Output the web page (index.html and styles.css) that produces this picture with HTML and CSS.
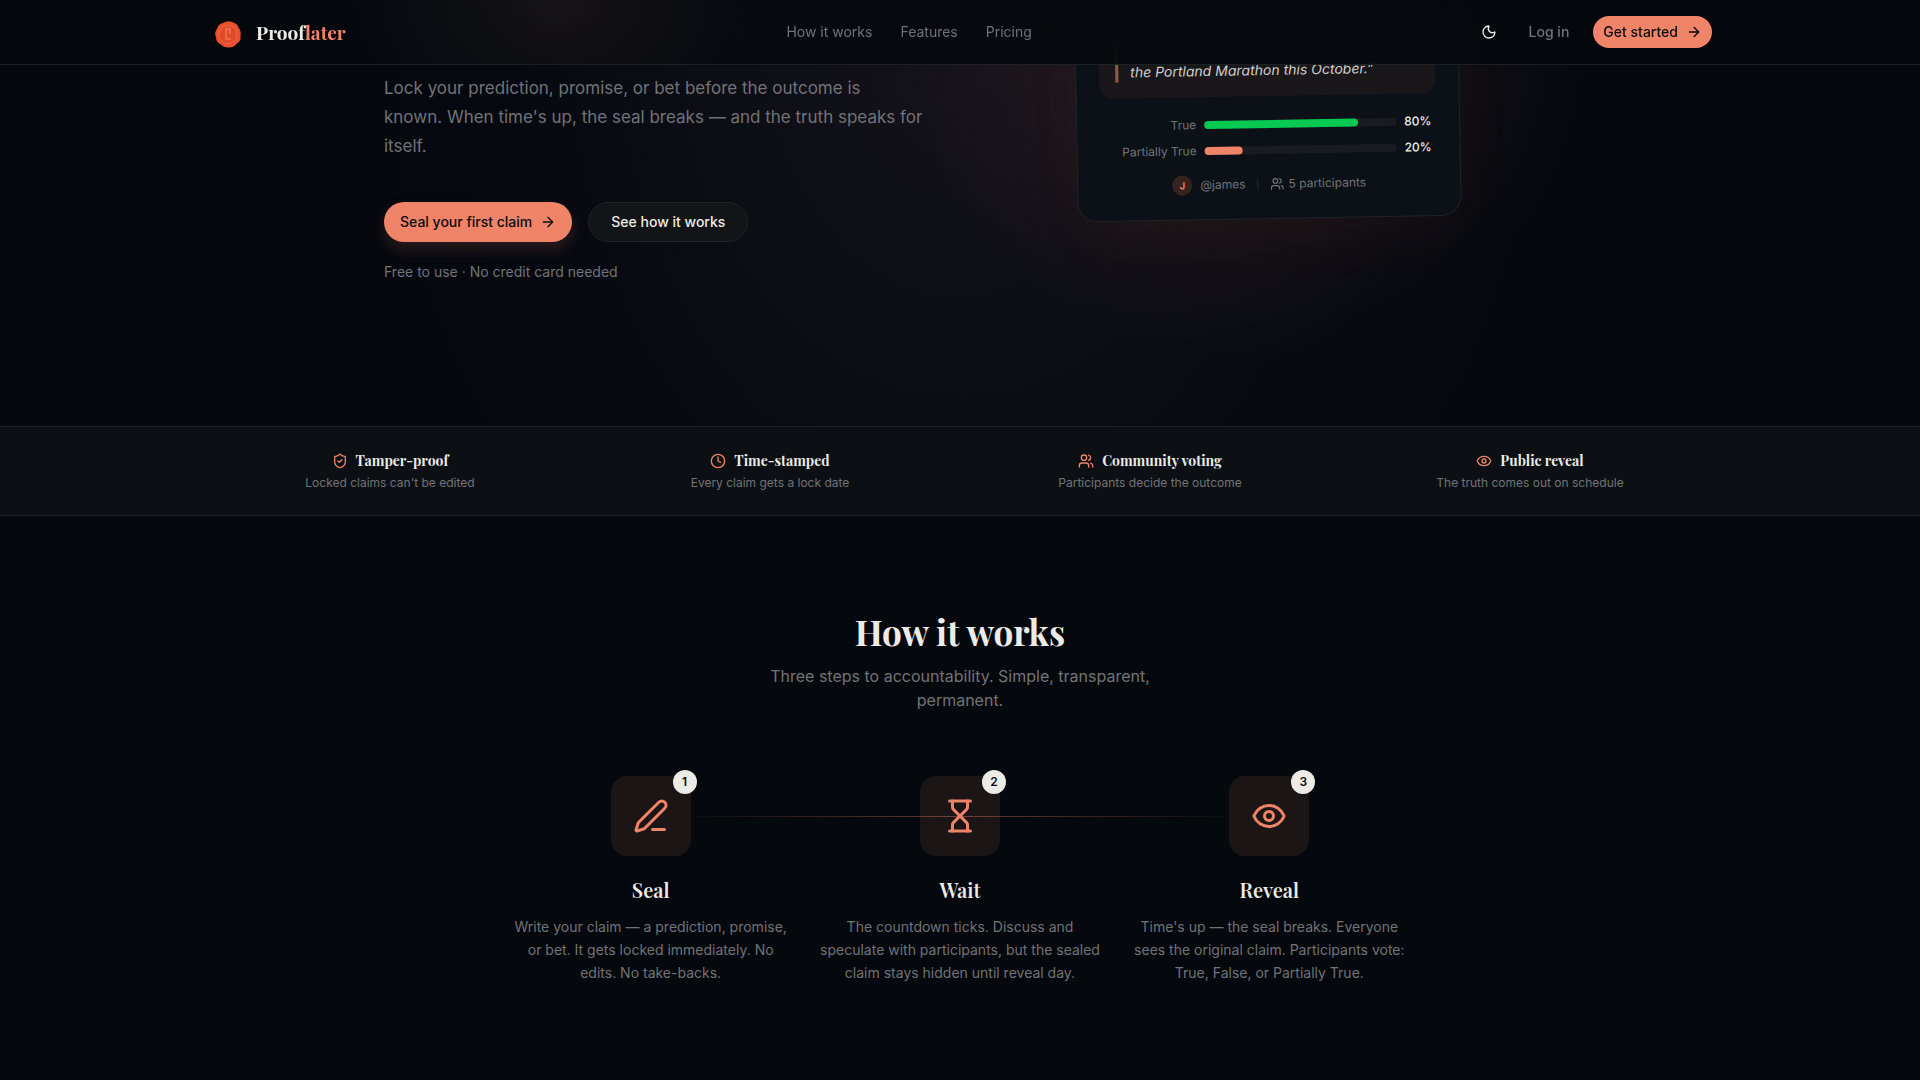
FILE: index.html
```
<!DOCTYPE html>
<html lang="en">

<head>
    <meta charset="UTF-8">
    <meta name="viewport" content="width=device-width, initial-scale=1.0">
    <title>Prooflater</title>
    <link rel="stylesheet" href="styles.css">
</head>

<body>
    <!-- shared icons -->
    <svg class="sprite" aria-hidden="true">
        <symbol id="arrow" viewBox="0 0 24 24">
            <path d="M5 12h14M12 5l7 7-7 7" />
        </symbol>
        <symbol id="users" viewBox="0 0 24 24">
            <path d="M16 21v-2a4 4 0 0 0-4-4H6a4 4 0 0 0-4 4v2" />
            <path d="M16 3.128a4 4 0 0 1 0 7.744" />
            <path d="M22 21v-2a4 4 0 0 0-3-3.87" />
            <circle cx="9" cy="7" r="4" />
        </symbol>
        <symbol id="eye" viewBox="0 0 24 24">
            <path d="M2.062 12.348a1 1 0 0 1 0-.696 10.75 10.75 0 0 1 19.876 0 1 1 0 0 1 0 .696 10.75 10.75 0 0 1-19.876 0" />
            <circle cx="12" cy="12" r="3" />
        </symbol>
    </svg>

    <header class="header">
        <div class="header-inner">
            <a href="#" class="logo">
                <svg class="seal" viewBox="0 0 40 40" aria-hidden="true">
                    <path class="seal-wax" d="M15 9q5-3 10-.5q4.500 1 5.500 5q3 4 2 8.500q1 5-3.500 7.500q-3 4-8 4q-5 .5-8-3q-5-2.500-5-7q-2-5 1-8.500q1-5 6-6z" />
                    <circle class="seal-ring" cx="20" cy="20.500" r="9" />
                    <path class="seal-mark" d="M18 15v10h5M18 15h4v5" />
                </svg>
                <span class="logo-text">Proof<span class="accent">later</span></span>
            </a>
            <nav class="nav">
                <a href="#how">How it works</a>
                <a href="#features">Features</a>
                <a href="#pricing">Pricing</a>
            </nav>
            <div class="actions">
                <button type="button" class="theme" aria-label="Toggle theme">
                    <svg class="icon" viewBox="0 0 24 24">
                        <path d="M20.985 12.486a9 9 0 1 1-9.473-9.472c.405-.022.617.46.402.803a6 6 0 0 0 8.268 8.268c.344-.215.825-.004.803.401" />
                    </svg>
                </button>
                <a href="#" class="login">Log in</a>
                <a href="#" class="btn btn-small">Get started <svg class="icon"><use href="#arrow" /></svg></a>
            </div>
        </div>
    </header>

    <main>
        <section class="hero">
            <div class="hero-inner">
                <div class="hero-text">
                    <p class="lead">Lock your prediction, promise, or bet before the outcome is<br> known. When time's up, the seal breaks — and the truth speaks for<br> itself.</p>
                    <div class="hero-buttons">
                        <a href="#" class="btn btn-primary">Seal your first claim <svg class="icon"><use href="#arrow" /></svg></a>
                        <a href="#how" class="btn btn-outline">See how it works</a>
                    </div>
                    <p class="note">Free to use · No credit card needed</p>
                </div>

                <div class="card">
                    <div class="claim">
                        <blockquote>the Portland Marathon this October.”</blockquote>
                    </div>
                    <div class="votes">
                        <div class="vote">
                            <span class="vote-label">True</span>
                            <div class="track"><div class="fill fill-true" style="width: 80%"></div></div>
                            <span class="vote-value">80%</span>
                        </div>
                        <div class="vote">
                            <span class="vote-label">Partially True</span>
                            <div class="track"><div class="fill fill-partial" style="width: 20%"></div></div>
                            <span class="vote-value">20%</span>
                        </div>
                    </div>
                    <div class="card-footer">
                        <span class="author"><span class="avatar">J</span>@james</span>
                        <span class="divider"></span>
                        <span class="people"><svg class="icon"><use href="#users" /></svg>5 participants</span>
                    </div>
                </div>
            </div>
        </section>

        <section class="trust" id="features">
            <div class="trust-inner">
                <div class="trust-item">
                    <h3>
                        <svg class="icon" viewBox="0 0 24 24">
                            <path d="M20 13c0 5-3.500 7.500-7.660 8.950a1 1 0 0 1-.67-.01C7.500 20.500 4 18 4 13V6a1 1 0 0 1 1-1c2 0 4.500-1.200 6.240-2.720a1.170 1.170 0 0 1 1.520 0C14.510 3.810 17 5 19 5a1 1 0 0 1 1 1z" />
                            <path d="m9 12 2 2 4-4" />
                        </svg>
                        Tamper-proof
                    </h3>
                    <p>Locked claims can't be edited</p>
                </div>
                <div class="trust-item">
                    <h3>
                        <svg class="icon" viewBox="0 0 24 24">
                            <circle cx="12" cy="12" r="10" />
                            <path d="M12 6v6l4 2" />
                        </svg>
                        Time-stamped
                    </h3>
                    <p>Every claim gets a lock date</p>
                </div>
                <div class="trust-item">
                    <h3><svg class="icon"><use href="#users" /></svg> Community voting</h3>
                    <p>Participants decide the outcome</p>
                </div>
                <div class="trust-item">
                    <h3><svg class="icon"><use href="#eye" /></svg> Public reveal</h3>
                    <p>The truth comes out on schedule</p>
                </div>
            </div>
        </section>

        <section class="how" id="how">
            <h2>How it works</h2>
            <p class="how-sub">Three steps to accountability. Simple, transparent, permanent.</p>
            <div class="steps">
                <div class="step">
                    <div class="tile">
                        <svg class="icon" viewBox="0 0 24 24">
                            <path d="M13 21h8" />
                            <path d="M21.174 6.812a1 1 0 0 0-3.986-3.987L3.842 16.174a2 2 0 0 0-.5.830l-1.321 4.352a.5.5 0 0 0 .623.622l4.353-1.320a2 2 0 0 0 .830-.497z" />
                        </svg>
                        <span class="badge">1</span>
                    </div>
                    <h3>Seal</h3>
                    <p>Write your claim — a prediction, promise, or bet. It gets locked immediately. No edits. No take-backs.</p>
                </div>
                <div class="step">
                    <div class="tile">
                        <svg class="icon" viewBox="0 0 24 24">
                            <path d="M5 22h14M5 2h14" />
                            <path d="M17 22v-4.172a2 2 0 0 0-.586-1.414L12 12l-4.414 4.414A2 2 0 0 0 7 17.828V22" />
                            <path d="M7 2v4.172a2 2 0 0 0 .586 1.414L12 12l4.414-4.414A2 2 0 0 0 17 6.172V2" />
                        </svg>
                        <span class="badge">2</span>
                    </div>
                    <h3>Wait</h3>
                    <p>The countdown ticks. Discuss and speculate with participants, but the sealed claim stays hidden until reveal day.</p>
                </div>
                <div class="step">
                    <div class="tile">
                        <svg class="icon"><use href="#eye" /></svg>
                        <span class="badge">3</span>
                    </div>
                    <h3>Reveal</h3>
                    <p>Time's up — the seal breaks. Everyone sees the original claim. Participants vote: True, False, or Partially True.</p>
                </div>
            </div>
        </section>
    </main>
</body>

</html>
```
FILE: styles.css
```
:root {
    --bg: #05080d;
    --panel: #0c1014;
    --text: #edebe6;
    --muted: #727376;
    --line: #1d2024;
    --coral: #f08468;
    --serif: "Playfair Display", "Liberation Serif", serif;
}

* {
    box-sizing: border-box;
    margin: 0;
    padding: 0;
}

body {
    background-color: var(--bg);
    color: var(--text);
    font-family: Inter, "Liberation Sans", sans-serif;
    font-size: 14px;
    line-height: 20px;
}

a {
    color: inherit;
    text-decoration: none;
}

.sprite {
    position: absolute;
    width: 0;
    height: 0;
}

.icon {
    width: 16px;
    height: 16px;
    flex: none;
    fill: none;
    stroke: currentColor;
    stroke-width: 2;
    stroke-linecap: round;
    stroke-linejoin: round;
}

.accent {
    color: var(--coral);
}

/* header */
.header {
    position: fixed;
    top: 0;
    left: 0;
    right: 0;
    z-index: 10;
    background-color: rgba(5, 8, 13, 0.85);
    background-image: radial-gradient(ellipse 220px 160px at 29% 0, rgba(240, 160, 140, 0.07), transparent);
    backdrop-filter: blur(24px);
    border-bottom: 1px solid var(--line);
}

.header-inner {
    display: flex;
    justify-content: space-between;
    align-items: center;
    max-width: 1536px;
    height: 64px;
    margin: 0 auto;
    padding: 0 16px;
}

.logo {
    display: flex;
    align-items: center;
    gap: 8px;
}

.seal {
    width: 40px;
    height: 40px;
    margin-top: 4px;
}

.seal-wax {
    fill: #e8502e;
}

.seal-ring {
    fill: #e04b2b;
    stroke: #f4663f;
    stroke-width: 1;
}

.seal-mark {
    fill: none;
    stroke: #ee6a40;
    stroke-width: 2;
}

/* no ligatures, so that "f" and "l" keep their own colours */
.logo-text {
    font-family: var(--serif);
    font-size: 19px;
    font-weight: bold;
    font-variant-ligatures: none;
    line-height: 28px;
}

.nav {
    display: flex;
    gap: 28px;
    color: var(--muted);
}

.actions {
    display: flex;
    align-items: center;
}

.theme {
    display: flex;
    padding: 8px;
    border: 0;
    background: none;
    color: var(--text);
    cursor: pointer;
}

.login {
    padding: 0 24px;
    color: var(--muted);
    font-weight: 500;
}

.btn {
    display: inline-flex;
    align-items: center;
    gap: 8px;
    height: 40px;
    border-radius: 20px;
    font-weight: 500;
}

.btn-small {
    height: 32px;
    padding: 0 10px;
    background-color: var(--coral);
    color: #0b0c0f;
}

.btn-primary {
    padding: 0 16px;
    background-color: var(--coral);
    color: #0b0c0f;
    box-shadow: 0 8px 16px rgba(240, 132, 104, 0.15);
}

.btn-outline {
    padding: 0 22px;
    background-color: #121418;
    border: 1px solid #202226;
}

/* hero */
.hero {
    overflow: hidden;
    background-image:
        radial-gradient(ellipse 340px 320px at 65% 10%, rgba(230, 125, 75, 0.13), transparent),
        radial-gradient(ellipse 460px 640px at 50% 5%, rgba(230, 150, 90, 0.06), transparent),
        radial-gradient(ellipse 660px 720px at 50% 20%, rgba(20, 20, 70, 0.18), transparent);
}

.hero-inner {
    display: grid;
    grid-template-columns: 1fr 540px;
    gap: 64px;
    max-width: 1152px;
    margin: 0 auto;
    padding-bottom: 144px;
}

.hero-text {
    padding-top: 74px;
}

.lead {
    color: var(--muted);
    font-size: 17px;
    line-height: 29px;
}

.hero-buttons {
    display: flex;
    gap: 16px;
    margin: 41px 0 20px;
}

.note {
    color: var(--muted);
}

.card {
    align-self: start;
    justify-self: center;
    width: 384px;
    padding: 23px 23px 24px;
    background-color: #0c1118;
    border: 1px solid #202328;
    border-radius: 20px;
    box-shadow: 0 16px 64px rgba(230, 120, 80, 0.04);
    color: var(--muted);
    font-size: 12px;
    line-height: 16px;
    transform: rotate(-1deg);
    transform-origin: center top;
}

.claim {
    padding: 16px;
    background-color: #1a171a;
    border-radius: 14px;
}

.claim blockquote {
    padding: 20px 0 0 12px;
    border-left: 3px solid #96564a;
    color: #d0cecb;
    font-size: 14px;
    font-style: italic;
    line-height: 20px;
}

.votes {
    display: grid;
    gap: 10px;
    margin: 20px 0 16px;
}

.vote {
    display: flex;
    align-items: center;
    gap: 8px;
}

.vote-label {
    width: 96px;
    text-align: right;
}

.track {
    flex: 1;
    height: 8px;
    background-color: #181b22;
    border-radius: 4px;
}

.fill {
    height: 8px;
    border-radius: 4px;
}

.fill-true {
    background-color: #05c951;
}

.fill-partial {
    background-color: var(--coral);
}

.vote-value {
    width: 32px;
    color: var(--text);
    font-weight: 500;
}

.card-footer {
    display: flex;
    justify-content: center;
    align-items: center;
    gap: 12px;
}

.author {
    display: flex;
    align-items: center;
    gap: 8px;
}

.avatar {
    width: 20px;
    height: 20px;
    border-radius: 50%;
    background-color: #36231f;
    color: var(--coral);
    font-size: 10px;
    font-weight: 600;
    line-height: 20px;
    text-align: center;
}

.divider {
    width: 1px;
    height: 12px;
    background-color: #23262b;
}

.people {
    display: flex;
    align-items: center;
    gap: 4px;
}

.people .icon {
    width: 14px;
    height: 14px;
}

/* trust strip */
.trust {
    background-color: var(--panel);
    border-top: 1px solid var(--line);
    border-bottom: 1px solid var(--line);
}

.trust-inner {
    display: grid;
    grid-template-columns: repeat(4, 1fr);
    gap: 16px;
    max-width: 1536px;
    margin: 0 auto;
    padding: 24px 16px;
}

.trust-item {
    text-align: center;
}

.trust-item h3 {
    display: flex;
    justify-content: center;
    align-items: center;
    gap: 8px;
    margin-bottom: 4px;
    font-family: var(--serif);
    font-size: 14px;
    line-height: 20px;
}

.trust-item .icon {
    color: var(--coral);
}

.trust-item p {
    color: var(--muted);
    font-size: 12px;
    line-height: 16px;
}

/* how it works */
.how {
    padding: 96px 16px;
    text-align: center;
}

.how h2 {
    font-family: var(--serif);
    font-size: 35px;
    line-height: 40px;
}

.how-sub {
    max-width: 384px;
    margin: 12px auto 64px;
    color: var(--muted);
    font-size: 16px;
    line-height: 24px;
}

.steps {
    position: relative;
    display: grid;
    grid-template-columns: repeat(3, 1fr);
    gap: 24px;
    max-width: 904px;
    margin: 0 auto;
}

/* connecting line behind the icons */
.steps::before {
    content: "";
    position: absolute;
    top: 40px;
    left: 18%;
    right: 18%;
    height: 1px;
    background-image: linear-gradient(to right, transparent, rgba(240, 132, 104, 0.4), transparent);
}

.tile {
    position: relative;
    display: grid;
    place-items: center;
    width: 80px;
    height: 80px;
    margin: 0 auto 20px;
    border-radius: 16px;
    background-color: rgba(240, 140, 110, 0.1);
    color: var(--coral);
}

.tile .icon {
    width: 36px;
    height: 36px;
}

.badge {
    position: absolute;
    top: -6px;
    right: -6px;
    width: 24px;
    height: 24px;
    border-radius: 50%;
    background-color: var(--text);
    color: #0b0c0f;
    font-size: 12px;
    font-weight: 600;
    line-height: 24px;
}

.step h3 {
    margin-bottom: 12px;
    font-family: var(--serif);
    font-size: 20px;
    font-weight: 600;
    line-height: 27px;
}

.step p {
    color: var(--muted);
    line-height: 23px;
}
```
